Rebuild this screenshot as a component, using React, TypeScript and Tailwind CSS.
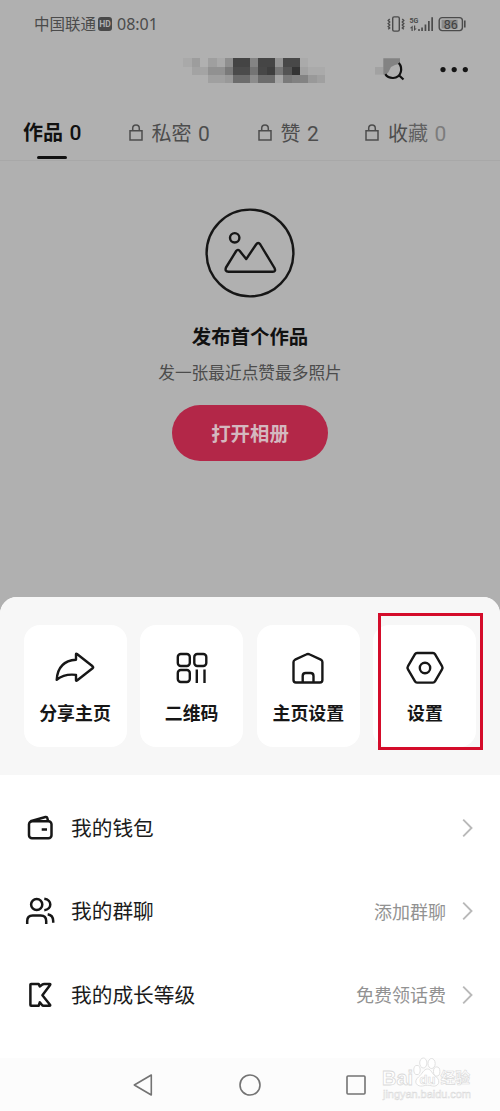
import type { ReactNode } from 'react'

const MOSAIC: [number, number, number, string][] = [
  [0, 0, 1, '#a9a9a9'], [1, 0, 1, '#9d9d9d'], [3, 0, 1, '#9f9f9f'], [4, 0, 1, '#a9a9a9'], [5, 0, 1, '#8f8f8f'],
  [6, 0, 2, '#444444'], [8, 0, 1, '#848484'], [9, 0, 2, '#454545'], [11, 0, 1, '#949494'], [12, 0, 2, '#484848'], [14, 0, 1, '#aaaaaa'],
  [1, 1, 1, '#a3a3a3'], [2, 1, 1, '#a4a4a4'], [3, 1, 2, '#919191'], [5, 1, 1, '#7a7a7a'], [6, 1, 2, '#4b4b4b'], [8, 1, 1, '#747474'],
  [9, 1, 1, '#474747'], [10, 1, 1, '#3e3e3e'], [11, 1, 1, '#777777'], [12, 1, 1, '#545454'], [13, 1, 1, '#343434'], [14, 1, 1, '#a2a2a2'], [15, 1, 2, '#aaaaaa'],
  [3, 2, 2, '#a0a0a0'], [5, 2, 1, '#999999'], [6, 2, 2, '#6c6c6c'], [8, 2, 1, '#8c8c8c'], [9, 2, 2, '#6c6c6c'], [11, 2, 1, '#a6a6a6'],
  [12, 2, 1, '#7a7a7a'], [13, 2, 1, '#818181'], [14, 2, 1, '#838383'], [15, 2, 1, '#999999'], [16, 2, 1, '#a0a0a0'],
]

function Lock() {
  return (
    <svg width="14" height="17" viewBox="0 0 14 17" fill="none" stroke="currentColor" strokeWidth="1.5">
      <path d="M1 6.8h12v9.2H1zM3.7 6.6V4.400a3.300 3.300 0 0 1 6.600 0v2.200" />
    </svg>
  )
}

function StatusBar() {
  return (
    <div className="flex h-12 items-center justify-between pl-[34px] pr-8 text-[#4b4b4b]">
      <div className="flex items-center text-[15.5px]">
        <span>中国联通</span>
        <span className="ml-[2px] mr-[5px] flex h-[14px] w-[14px] items-center justify-center rounded-[3px] bg-[#494949] font-[Roboto] text-[8.5px] font-bold text-[#b0b0b0]">HD</span>
        <span className="font-['Noto_Sans'] text-[16px]">08:01</span>
      </div>
      <div className="flex items-center">
        <svg width="18" height="16" viewBox="0 0 18 16" fill="none" stroke="currentColor" strokeWidth="1.4">
          <rect x="5.7" y=".9" width="6.6" height="14.2" rx="1.4" />
          <path d="M2.7 3 1.2 4.5 2.7 6 1.2 7.5 2.7 9 1.2 10.5 2.7 12 1.2 13.3M15.3 3l1.5 1.5L15.3 6l1.5 1.5L15.3 9l1.5 1.5-1.5 1.5 1.5 1.3" />
        </svg>
        <svg className="ml-[4px]" width="25" height="16" viewBox="0 0 25 16" fill="currentColor">
          <text x="0.5" y="6.6" fontFamily="Roboto" fontSize="8" fontWeight="700" textLength="9" lengthAdjust="spacingAndGlyphs">5G</text>
          <path d="M.8 12.200 3.700 9.500V15H2.500v-2.800zM5 9.500h1.200v3h1.500L5 15zM9.200 13h1.600v2H9.200zM12.200 11.400h1.700V15h-1.700zM15.600 8.600h1.700V15h-1.700zM19 5h1.700v10H19zM22.300 1.200H24V15h-1.700z" />
        </svg>
        <svg className="ml-[4px]" width="30" height="16" viewBox="0 0 30 16">
          <rect x="1.2" y="1.6" width="23.2" height="13" rx="3" fill="none" stroke="currentColor" strokeWidth="1.4" />
          <rect x="3.6" y="3.8" width="16" height="8.6" fill="#8a8a8a" />
          <text x="12.8" y="12.5" textAnchor="middle" fontFamily="Roboto" fontSize="12.5" fill="#404040">86</text>
          <path d="M26.8 4.5v7" stroke="currentColor" strokeWidth="1.6" />
        </svg>
      </div>
    </div>
  )
}

function Header() {
  return (
    <div className="flex h-[52px] items-start pl-[183px]">
      <svg className="mt-[10px] shrink-0" width="142" height="26" viewBox="0 0 142 26" shapeRendering="crispEdges">
        {MOSAIC.map(([x, y, w, fill]) => (
          <rect key={`${x}-${y}`} x={x * 8.33 + 0.3} y={y * 8.33 + 0.3} width={w * 8.33} height="8.33" fill={fill} />
        ))}
      </svg>
      <svg className="ml-[50px] mt-[10px] shrink-0" width="30" height="24" viewBox="0 0 30 24" fill="none">
        <path d="M0 9h8.3v7.6H0z" fill="#a2a2a2" />
        <path d="M8.3.3H25v5.5l-5 1.2-4 2-2.5 5-2.200 2.600h-3z" fill="#838383" />
        <path d="M23.8 5c4.200 5 2.800 14.500-5.700 15-3.800.1-6.100-1.200-7.800-3.800M24.200 17.500l4.300 4" stroke="#111" strokeWidth="2.2" />
      </svg>
      <svg className="ml-[34px] mt-[18px]" width="30" height="8" viewBox="0 0 30 8" fill="#151515">
        <circle cx="4" cy="3.6" r="2.6" />
        <circle cx="15.2" cy="3.6" r="2.6" />
        <circle cx="26.3" cy="3.6" r="2.6" />
      </svg>
    </div>
  )
}

function Tabs() {
  return (
    <div className="flex h-[61px] overflow-hidden border-b border-[#a8a8a8] pl-[23px] text-[20px] leading-[30px] text-[#4d4d4d]">
      <div className="w-[60px] shrink-0 pt-[17px] font-bold whitespace-nowrap text-[#111]">
        作品<span className="ml-[6.5px] font-[Roboto] text-[21px] font-medium">0</span>
        <div className="ml-[13.5px] mt-[7.5px] h-[3px] w-[30.5px] rounded-full bg-[#111]" />
      </div>
      <div className="ml-[45.5px] flex w-[129px] shrink-0 gap-[9px] pt-[18px]">
        <span className="mt-[6px]"><Lock /></span>
        <span className="whitespace-nowrap">私密<span className="ml-[6.5px] font-[Roboto] text-[21px]">0</span></span>
      </div>
      <div className="flex w-[107.5px] shrink-0 gap-[9px] pt-[18px]">
        <span className="mt-[6px]"><Lock /></span>
        <span className="whitespace-nowrap">赞<span className="ml-[6.5px] font-[Roboto] text-[21px]">2</span></span>
      </div>
      <div className="flex shrink-0 gap-[9px] pt-[18px]">
        <span className="mt-[6px]"><Lock /></span>
        <span className="whitespace-nowrap">收<span className="text-[#606060]">藏</span><span className="ml-[6.5px] font-[Roboto] text-[21px] text-[#7c7c7c]">0</span></span>
      </div>
    </div>
  )
}

function EmptyState() {
  return (
    <div className="flex h-[436px] flex-col items-center pt-[47px]">
      <svg width="90" height="90" viewBox="0 0 90 90" fill="none" stroke="#161616" strokeWidth="2.4">
        <circle cx="45" cy="45" r="43.4" />
        <circle cx="29.7" cy="29.8" r="4.7" />
        <path strokeLinejoin="round" d="M21 59.500 31.200 43q1.600-2.200 3.400-.2l6.600 8.300 9.900-14.600q2.100-3.100 4.200 0L69.500 60q1.700 3.700-1.700 3.700H23.500q-4 0-2.500-4.200z" />
      </svg>
      <div className="mt-[24px] text-[19.4px] font-bold leading-[28px] text-[#111]">发布首个作品</div>
      <div className="mt-[10px] text-[16.7px] leading-[24px] text-[#4c4c4c]">发一张最近点赞最多照片</div>
      <button className="mt-[21px] h-[56px] w-[156px] rounded-full bg-[#b32748] text-[19.4px] font-bold text-[#d4b8bf]">打开相册</button>
    </div>
  )
}

function Card({ label, children }: { label: string; children: ReactNode }) {
  return (
    <div className="flex h-[122px] w-[103px] flex-col items-center rounded-2xl bg-white pt-[23px]">
      <svg width="40" height="40" viewBox="0 0 40 40" fill="none" stroke="#171717" strokeWidth="2.4" strokeLinejoin="round">
        {children}
      </svg>
      <div className="mt-[11px] text-[17.9px] font-bold leading-[26px] text-[#161616]">{label}</div>
    </div>
  )
}

function Row({ label, hint, icon }: { label: string; hint?: string; icon: ReactNode }) {
  return (
    <div className="flex h-[83.5px] items-center pl-[25px] pr-[27.5px]">
      <svg width="30" height="30" viewBox="0 0 30 30" fill="none" stroke="#171717" strokeWidth="2.5" strokeLinejoin="round">
        {icon}
      </svg>
      <span className="-mt-px ml-[16px] text-[20.7px] text-[#1b1b1b]">{label}</span>
      <span className="ml-auto text-[18px] text-[#929292]">{hint}</span>
      <svg className="ml-[15.5px]" width="11" height="20" viewBox="0 0 11 20" fill="none" stroke="#b9b9b9" strokeWidth="1.9">
        <path d="m1.200 1.700 8.300 8.300-8.300 8.300" />
      </svg>
    </div>
  )
}

function Watermark() {
  return (
    <svg className="absolute right-[29px] top-[-2px]" width="96" height="48" viewBox="0 0 96 48" fill="#fff" stroke="#d9d9d9" strokeWidth=".8" fontFamily="Liberation Sans, Noto Sans CJK SC, sans-serif">
      <text x="7" y="29" fontSize="21" fontWeight="700" textLength="31" lengthAdjust="spacingAndGlyphs">Bai</text>
      <path d="M52.500 13c-4 0-5 5-9 8-6 5-1 10 4 9 4-1 6-1 10 0 5 1 9-4 4-9-5-3-5-8-9-8z" />
      <ellipse cx="42" cy="14" rx="3.2" ry="4.6" />
      <ellipse cx="48.3" cy="7" rx="3.6" ry="5" />
      <ellipse cx="56.6" cy="7.5" rx="3.6" ry="5" />
      <ellipse cx="61.7" cy="15.5" rx="3.2" ry="4.6" />
      <text x="44.5" y="28" fontSize="13" fontWeight="700" strokeWidth=".6">du</text>
      <text x="65.5" y="27" fontSize="14.8" fontWeight="700" strokeWidth=".6">经验</text>
      <text x="8" y="42" fontSize="11" strokeWidth=".5" textLength="88">jingyan.baidu.com</text>
    </svg>
  )
}

export default function App() {
  return (
    <div className="h-[1111px] w-[500px] overflow-hidden bg-[#b0b0b0] font-['Noto_Sans_CJK_SC',sans-serif]">
      <StatusBar />
      <Header />
      <Tabs />
      <EmptyState />

      {/* Bottom sheet */}
      <div className="overflow-hidden rounded-t-[17px] bg-white">
        <div className="relative flex h-[178px] justify-between bg-[#f7f7f7] px-[23.5px] pt-[28px]">
          <Card label="分享主页">
            <path d="M21 6.200v5.500C9 12.500 2.500 19 1.700 31.800c5.800-4.700 12-5.800 19.300-4.900v5.400q.2 1 1 .2l15.600-12.200q1.200-1 0-2L22 6q-1-.8-1 .2z" />
          </Card>
          <Card label="二维码">
            <rect x="5.8" y="6" width="12" height="12" rx="3" />
            <rect x="22.3" y="6" width="12" height="12" rx="3" />
            <rect x="5.8" y="22" width="12" height="12" rx="3" />
            <path d="M24.800 21.500V35M32.500 21.500V35" />
          </Card>
          <Card label="主页设置">
            <path d="M18.200 6.500q1.800-1 3.600 0l11 5.200q1.600.8 1.600 2.300v18q0 2.500-2.500 2.500H8q-2.500 0-2.500-2.500V14q0-1.500 1.600-2.300zM14.700 34v-6q0-3 3-3h4.800q3 0 3 3v6" />
          </Card>
          <Card label="设置">
            <path d="M12 5h16q1.300 0 2 1.200l7 12q1 1.600 0 3.200l-7 12q-.7 1.200-2 1.200H12q-1.300 0-2-1.200l-7-12q-1-1.600 0-3.200l7-12Q10.700 5 12 5z" />
            <circle cx="20" cy="20" r="5.2" />
          </Card>
          <div className="absolute left-[378px] top-[16px] h-[137px] w-[105px] border-3 border-[#d40c2a]" />
        </div>

        <div className="h-[283px] bg-white pt-[11px]">
          <Row
            label="我的钱包"
            icon={
              <>
                <rect x="4" y="8.2" width="22.5" height="17" rx="3" />
                <path d="M5.500 8.300 20.500 4q1.500-.3 1.800 1l.8 3.200M16.700 16.600h5.300" />
              </>
            }
          />
          <Row
            label="我的群聊"
            hint="添加群聊"
            icon={
              <>
                <circle cx="11.7" cy="8.5" r="5.6" />
                <path d="M2.200 28v-3q0-5.500 5.500-5.500h8q5.500 0 5.500 5.500v3M19.300 2.700c8 1 8 10.800 0 11.500M22.700 18.200q5.500 1 5.500 6.800v1.800" />
              </>
            }
          />
          <Row
            label="我的成长等级"
            hint="免费领话费"
            icon={
              <path d="M5.400 4.600q0-.7.700-.7h7.500l1.200 2.500 2.200-1.700q1-.8 2.200-.8h5.500q1 0 .4 1l-7.700 10.400 7.600 9.500q.7 1-.5 1h-6q-1 0-1.700-1l-2-2.500-1.200 3.500H6.100q-.7 0-.7-.7z" />
            }
          />
        </div>

        {/* System navigation */}
        <div className="relative flex h-[53px] items-center justify-between bg-[#fcfcfc] pl-[132px] pr-[133px]">
          <svg width="22" height="24" viewBox="0 0 22 24" fill="none" stroke="#737373" strokeWidth="1.6" strokeLinejoin="round">
            <path d="M19.300 2v20L2.300 12z" />
          </svg>
          <svg width="24" height="24" viewBox="0 0 24 24" fill="none" stroke="#737373" strokeWidth="1.6">
            <circle cx="12" cy="12" r="10" />
          </svg>
          <svg width="22" height="22" viewBox="0 0 22 22" fill="none" stroke="#737373" strokeWidth="1.6">
            <rect x="2" y="2" width="18" height="18" rx="1" />
          </svg>
          <Watermark />
        </div>
      </div>
    </div>
  )
}
